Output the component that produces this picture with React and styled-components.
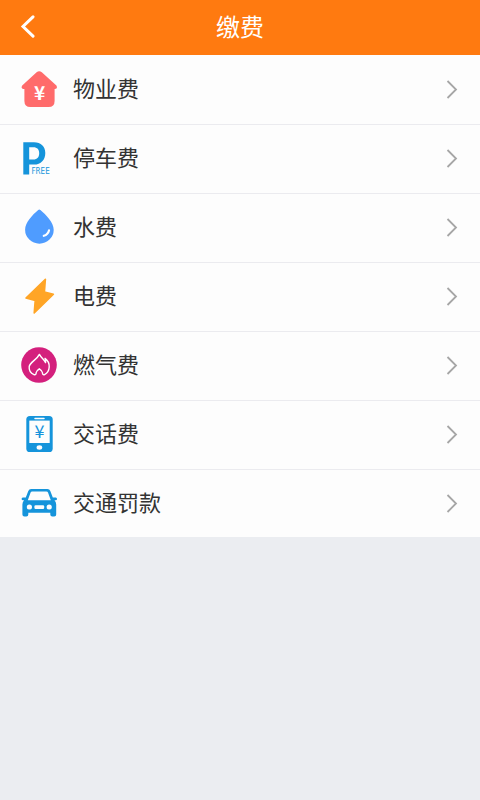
import React from "react";
import styled, { createGlobalStyle } from "styled-components";

const GlobalStyle = createGlobalStyle`
  * { box-sizing: border-box; }
  body {
    margin: 0;
    background: #ebedf1;
    color: #333;
    font-family: "Noto Sans CJK SC", "Noto Sans", sans-serif;
  }
`;

const Header = styled.header`
  display: grid;
  grid-template-columns: 56px 1fr 56px;
  align-items: center;
  height: 55px;
  background: #ff7a10;
  color: #fff;
`;

const BackButton = styled.button`
  display: flex;
  align-items: center;
  height: 52px;
  padding: 0 0 2px 20px;
  border: 0;
  background: none;
  color: inherit;
  cursor: pointer;
`;

const Title = styled.h1`
  margin: 0;
  padding-bottom: 4px;
  text-align: center;
  font-size: 24px;
  line-height: 32px;
  font-weight: 400;
`;

const FeeList = styled.ul`
  margin: 0;
  padding: 0;
  list-style: none;
  background: #fdfdfd;
`;

const FeeItem = styled.li`
  border-bottom: 1px solid #ebebef;

  &:first-child {
    padding-top: 1px;
  }

  &:last-child {
    border-bottom: 0;
  }
`;

const FeeLink = styled.a`
  display: flex;
  align-items: center;
  gap: 16px;
  height: 68px;
  padding: 0 22px 2px 21px;
  color: inherit;
  text-decoration: none;

  ${FeeItem}:last-child & {
    height: 67px;
  }
`;

const FeeName = styled.span`
  flex: 1;
  padding-bottom: 4px;
  font-size: 22px;
  line-height: 32px;
`;

const Icon = styled.svg`
  flex: none;
  display: block;
`;

const IconText = styled.text`
  font-family: ${(p) => p.$family || '"Noto Sans CJK SC"'}, sans-serif;
  font-size: ${(p) => p.$size}px;
  font-weight: ${(p) => (p.$bold ? 700 : 400)};
  text-anchor: middle;
`;

const FeeIcon = ({ children }) => (
  <Icon width="36" height="36" viewBox="0 0 36 36" aria-hidden="true">
    {children}
  </Icon>
);

const HouseIcon = () => (
  <FeeIcon>
    <path
      fill="#ff6b6b"
      d="M15.6 1.2Q18.2-.7 20.8 1.2L35.4 14.6Q37 17.8 34 18H33.6V30Q33.6 36 27.6 36H9.4Q3.4 36 3.4 30V18H2.4Q-.4 17.8 1.2 14.6Z"
    />
    <IconText x="18.5" y="28.6" $size="19" $bold fill="#fff">¥</IconText>
  </FeeIcon>
);

const ParkingIcon = () => (
  <FeeIcon>
    <path
      fill="#1594db"
      fillRule="evenodd"
      d="M2.3 2.3H13C20 2.3 24.3 6.4 24.3 13C24.3 19.8 20 24.6 13 24.6H8.2V34.5H2.3ZM8.2 7.3V19.5H12.4C16.3 19.5 18.2 17 18.2 13.2C18.2 9.5 16.3 7.3 12.4 7.3Z"
    />
    <IconText x="19.6" y="34.4" $size="8" $family='"DejaVu Sans Condensed"' fill="#1594db">FREE</IconText>
  </FeeIcon>
);

const WaterIcon = () => (
  <FeeIcon>
    <path
      fill="#4f9cff"
      d="M17.2.9Q18.3-.1 19.4.9C25 5.8 32.7 13.3 32.7 20.7A14.3 14 0 0 1 4.1 20.7C4.1 13.3 11.6 5.8 17.2.9Z"
    />
    <path d="M28 21.4Q27 25.4 22.8 26.8" fill="none" stroke="#fff" strokeWidth="2.2" strokeLinecap="round" />
  </FeeIcon>
);

const PowerIcon = () => (
  <FeeIcon>
    <path
      fill="#ffa526"
      stroke="#ffa526"
      strokeWidth="1.6"
      strokeLinejoin="round"
      d="M24.4 1.2L5 20L14.2 22.6L13.2 35L32.4 16.2L23.4 14Z"
    />
  </FeeIcon>
);

const GasIcon = () => (
  <FeeIcon>
    <circle cx="18" cy="18" r="17.8" fill="#d4207d" />
    <path
      fill="none"
      stroke="#fff"
      strokeWidth="1.4"
      strokeLinejoin="round"
      strokeLinecap="round"
      d="M13 27.6C9.6 26 7.8 23 8.2 19.6C8.8 15.2 15.8 12.8 18.4 7.4C20.4 11 23 12.6 24.6 15.6C25.2 14 24.8 12.8 24 11.4C27 13.6 28.4 16.6 28.2 20C28 23.4 26.4 26.2 23.6 27.6C22 28.4 21.4 26.8 21.4 25.6C21.4 24 19.8 22.8 18.3 21.8C16.8 22.8 15.2 24 15.2 25.6C15.2 26.8 14.6 28.4 13 27.6Z"
    />
  </FeeIcon>
);

const PhoneIcon = () => (
  <FeeIcon>
    <rect x="5.3" y="0" width="26.4" height="36" rx="3.6" fill="#1594db" />
    <rect x="8.3" y="4.6" width="20.4" height="22.4" fill="#fdfdfd" />
    <path d="M14 2.4H23" stroke="#fdfdfd" strokeWidth="1.5" strokeLinecap="round" />
    <ellipse cx="18.4" cy="31.5" rx="2.8" ry="2.2" fill="#fdfdfd" />
    <IconText x="18.6" y="21.7" $size="18" fill="#1594db">¥</IconText>
  </FeeIcon>
);

const CarIcon = () => (
  <FeeIcon>
    <path
      fill="#1594db"
      fillRule="evenodd"
      d="M10.2 4H26.4Q28.6 4 29.3 6.1L31.8 12.6H34.8Q36 12.7 36 14Q36 15.2 34.5 15.2H33.5Q35.2 17 35.2 19.5V29.6Q35.2 31.6 33.2 31.6H31.3Q29.3 31.6 29.3 29.6V27.7H7.3V29.6Q7.3 31.6 5.3 31.6H3.4Q1.4 31.6 1.4 29.6V19.5Q1.4 17 3.1 15.2H2.1Q.6 15.2.6 14Q.6 12.7 1.8 12.6H4.8L7.3 6.1Q8 4 10.2 4ZM11.2 6.4Q10 6.4 9.6 7.5L6.8 15.2H29.8L27 7.5Q26.6 6.4 25.4 6.4Z"
    />
    <circle cx="8.4" cy="22" r="2.6" fill="#fdfdfd" />
    <circle cx="28.2" cy="22" r="2.6" fill="#fdfdfd" />
    <rect x="13.4" y="20.3" width="9.8" height="3.6" rx="1.2" fill="#fdfdfd" />
  </FeeIcon>
);

const ForwardArrow = () => (
  <Icon width="12" height="20" viewBox="0 0 12 20" aria-hidden="true">
    <path d="M1.5 2L10 10.5L1.5 19" fill="none" stroke="#a6a6a6" strokeWidth="1.8" />
  </Icon>
);

const fees = [
  { name: "物业费", Glyph: HouseIcon },
  { name: "停车费", Glyph: ParkingIcon },
  { name: "水费", Glyph: WaterIcon },
  { name: "电费", Glyph: PowerIcon },
  { name: "燃气费", Glyph: GasIcon },
  { name: "交话费", Glyph: PhoneIcon },
  { name: "交通罚款", Glyph: CarIcon },
];

export default function App() {
  return (
    <>
      <GlobalStyle />
      <Header>
        <BackButton type="button" aria-label="返回">
          <Icon width="16" height="24" viewBox="0 0 16 24" aria-hidden="true">
            <path
              d="M13 1.8L3 11.5L13 21.2"
              fill="none"
              stroke="currentColor"
              strokeWidth="3"
              strokeLinecap="round"
            />
          </Icon>
        </BackButton>
        <Title>缴费</Title>
      </Header>
      <main>
        <FeeList>
          {fees.map(({ name, Glyph }) => (
            <FeeItem key={name}>
              <FeeLink href="#">
                <Glyph />
                <FeeName>{name}</FeeName>
                <ForwardArrow />
              </FeeLink>
            </FeeItem>
          ))}
        </FeeList>
      </main>
    </>
  );
}
